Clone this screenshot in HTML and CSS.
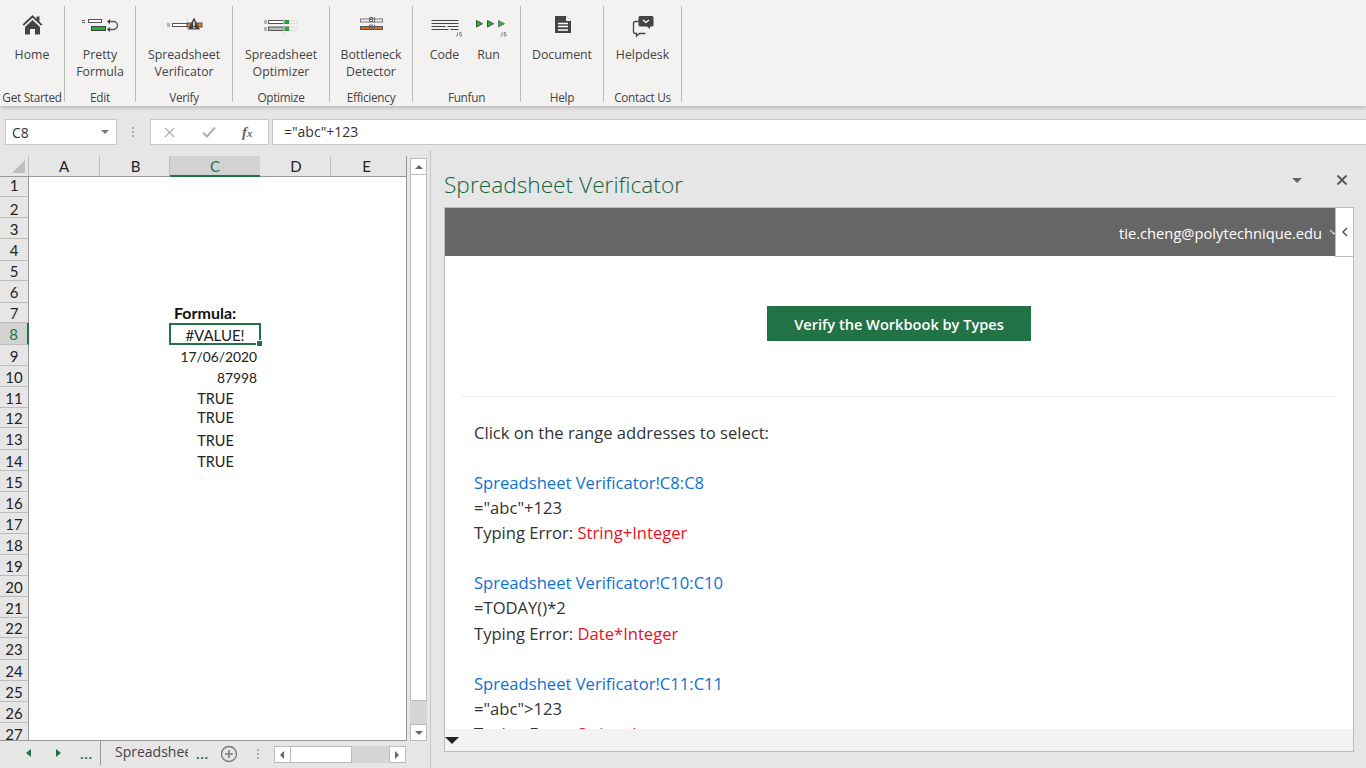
FILE: index.html
```html
<!DOCTYPE html>
<html lang="en">
<head>
<meta charset="utf-8">
<title>Spreadsheet Verificator</title>
<link rel="stylesheet" href="styles.css">
</head>
<body>
<div class="app">
  <header class="ribbon">
    <section class="group g-home">
      <div class="tools"><div class="tool">
        <svg class="icon" viewBox="0 0 48 32"><g transform="translate(.5 -5)"><path fill="#444" d="M24 6 14 15.500l1.300 1.300L24 8.800l8.700 8 1.300-1.300-3-2.800V7.500h-3v2.400z"/><path fill="#444" d="M16.500 18 24 11l7.500 7v7.500H26.500V20h-5v5.500h-5z"/></g></svg>
        <span class="lbl">Home</span></div></div>
      <div class="gname">Get Started</div>
    </section>
    <section class="group g-edit">
      <div class="tools"><div class="tool">
        <svg class="icon" viewBox="0 0 48 32"><g fill="none" stroke="#555"><path d="M6 6.500h3M6 8.500h3"/><rect x="12.500" y="5.500" width="13" height="3" fill="#fff"/><rect x="15.500" y="12.500" width="14" height="4" fill="#22b33a" stroke="#444"/><path stroke-width="1.400" d="M33 7.500h4.500a3.500 3.500 0 0 1 0 8H32"/></g><path fill="#444" d="M34 5v5l-3-2.500zM31 15.500l3-2.500v5z"/></svg>
        <span class="lbl">Pretty<br>Formula</span></div></div>
      <div class="gname">Edit</div>
    </section>
    <section class="group g-verify">
      <div class="tools"><div class="tool">
        <svg class="icon" viewBox="0 0 48 32"><g fill="none"><path stroke="#777" d="M7 10h3M7 12h3"/><rect x="12.500" y="9.500" width="15" height="3" fill="#fff" stroke="#555"/><path stroke="#ddd" d="M27.500 3v16"/><rect x="27" y="9" width="15" height="4" fill="#e07a1f" stroke="#555"/></g><path fill="#444" d="M34 3.500 40 15.500H28z"/><path fill="#fff" d="M33.300 7.500h1.400V12h-1.400zM33.300 13h1.400v1.500h-1.400z"/></svg>
        <span class="lbl">Spreadsheet<br>Verificator</span></div></div>
      <div class="gname">Verify</div>
    </section>
    <section class="group g-opt">
      <div class="tools"><div class="tool">
        <svg class="icon" viewBox="0 0 48 32"><g fill="none"><path stroke="#777" d="M7 7h3M7 9h3M7 14h3M7 16h3"/><rect x="11.500" y="6.500" width="21" height="3" fill="#fff" stroke="#555"/><rect x="11.500" y="13" width="21" height="3.500" fill="#bbb" stroke="#555"/><rect x="26" y="6.500" width="6" height="3" fill="#14b82a"/><rect x="26" y="13" width="6" height="3.500" fill="#14b82a"/><rect x="32.500" y="6.500" width="8" height="3" stroke="#ddd"/><rect x="32.500" y="13" width="8" height="3.500" stroke="#ddd"/><path stroke="#ddd" d="M27 3v18"/></g></svg>
        <span class="lbl">Spreadsheet<br>Optimizer</span></div></div>
      <div class="gname">Optimize</div>
    </section>
    <section class="group g-eff">
      <div class="tools"><div class="tool">
        <svg class="icon" viewBox="0 0 48 32"><g fill="none"><rect x="13.500" y="5" width="22" height="3" stroke="#777" fill="#f4f4f4"/><rect x="13.500" y="12.500" width="22" height="3" stroke="#555" fill="#d9691c"/><path stroke="#666" d="M22.500 3.500h3v2h-3zM22.500 5.500h3v2h-3zM27.500 3v5.500M22.500 11h3v2h-3zM22.500 13h3v2h-3zM27.500 10.500v5.500"/></g></svg>
        <span class="lbl">Bottleneck<br>Detector</span></div></div>
      <div class="gname">Efficiency</div>
    </section>
    <section class="group g-fun">
      <div class="tools"><div class="tool t-code">
        <svg class="icon" viewBox="0 0 48 32"><g transform="translate(1.500 0)"><path fill="none" stroke="#444" d="M9 6.500h27M9 9.500h27M9 12.500h14M25 12.500h11M9 15.500h17M28 15.500h8"/><path fill="none" stroke="#777" stroke-width=".8" d="M35 18.500v3.500h-1.500M39 18.500h-2v1.700h2v1.800h-2"/></g></svg>
        <span class="lbl">Code</span></div>
        <div class="tool t-run">
        <svg class="icon" viewBox="0 0 48 32"><g transform="translate(1 0)"><g stroke="#444"><path fill="#17c427" d="M10.500 6.500v6.500l6-3.300zM21.500 6.500v6.500l6-3.300z"/><path fill="#17c427" stroke="#777" d="M32.500 6.500v6.500l6-3.300z"/></g><path fill="none" stroke="#777" stroke-width=".8" d="M36 18.500v3.500h-1.500M40 18.500h-2v1.700h2v1.800h-2"/></g></svg>
        <span class="lbl">Run</span></div></div>
      <div class="gname">Funfun</div>
    </section>
    <section class="group g-help">
      <div class="tools"><div class="tool">
        <svg class="icon" viewBox="0 0 48 32"><g transform="translate(1 1)"><path fill="#444" d="M16 1h11l5 5v12H16z"/><path fill="#f3f2f1" d="M27 1l5 5h-5z"/><path fill="none" stroke="#fff" stroke-width="1.400" d="M19 8.500h10M19 11.500h10M19 15h10"/></g></svg>
        <span class="lbl">Document</span></div></div>
      <div class="gname">Help</div>
    </section>
    <section class="group g-contact">
      <div class="tools"><div class="tool">
        <svg class="icon" viewBox="0 0 48 32"><g transform="translate(-1 1)"><path fill="none" stroke="#444" stroke-width="1.300" d="M21 6.500h-3.500a2 2 0 0 0-2 2v8a2 2 0 0 0 2 2h1v2.500l3-2.500h6"/><path fill="#444" d="M22 1h12a1.500 1.500 0 0 1 1.500 1.500V10a1.500 1.500 0 0 1-1.500 1.500h-2V14l-3-2.500h-7A1.500 1.500 0 0 1 20.500 10V2.500A1.500 1.500 0 0 1 22 1z"/><path fill="none" stroke="#fff" stroke-width="1.300" d="M25 5l3 2.500L31 5"/></g></svg>
        <span class="lbl">Helpdesk</span></div></div>
      <div class="gname">Contact Us</div>
    </section>
  </header>

  <div class="formula-bar">
    <div class="namebox"><span>C8</span><i class="caret"></i></div>
    <div class="fb-dots"></div>
    <div class="fb-btns">
      <svg class="fb-x" viewBox="0 0 12 12"><path d="M1 1l10 10M11 1 1 11" stroke="#b5b5b5" stroke-width="1.500"/></svg>
      <svg class="fb-check" viewBox="0 0 14 12"><path d="M1 6.500 5 10.500 13 1.500" fill="none" stroke="#b5b5b5" stroke-width="2.200"/></svg>
      <span class="fx">f<sub>x</sub></span>
    </div>
    <div class="fb-input">="abc"+123</div>
  </div>

  <main class="main">
    <div class="sheet-area">
      <div class="sheet-top">
        <div class="sheet">
          <div class="col-heads">
            <div class="corner"><i></i></div>
            <div class="ch ca">A</div><div class="ch cb">B</div><div class="ch cc sel">C</div><div class="ch cd">D</div><div class="ch ce">E</div>
          </div>
          <div class="rows">
            <div class="row h20"><b class="rh">1</b></div>
            <div class="row h21"><b class="rh">2</b></div>
            <div class="row h21"><b class="rh">3</b></div>
            <div class="row h22"><b class="rh">4</b></div>
            <div class="row h20"><b class="rh">5</b></div>
            <div class="row h22"><b class="rh">6</b></div>
            <div class="row h20"><b class="rh">7</b><div class="cell bold">Formula:</div></div>
            <div class="row h22"><b class="rh active">8</b><div class="cell center active-cell">#VALUE!<i class="handle"></i></div></div>
            <div class="row h21"><b class="rh">9</b><div class="cell right">17/06/2020</div></div>
            <div class="row h21"><b class="rh">10</b><div class="cell right">87998</div></div>
            <div class="row h21"><b class="rh">11</b><div class="cell center low">TRUE</div></div>
            <div class="row h20"><b class="rh">12</b><div class="cell center high">TRUE</div></div>
            <div class="row h22"><b class="rh">13</b><div class="cell center low">TRUE</div></div>
            <div class="row h21"><b class="rh">14</b><div class="cell center low">TRUE</div></div>
            <div class="row h21"><b class="rh">15</b></div>
            <div class="row h21"><b class="rh">16</b></div>
            <div class="row h21"><b class="rh">17</b></div>
            <div class="row h21"><b class="rh">18</b></div>
            <div class="row h21"><b class="rh">19</b></div>
            <div class="row h21"><b class="rh">20</b></div>
            <div class="row h21"><b class="rh">21</b></div>
            <div class="row h20"><b class="rh">22</b></div>
            <div class="row h22"><b class="rh">23</b></div>
            <div class="row h21"><b class="rh">24</b></div>
            <div class="row h21"><b class="rh">25</b></div>
            <div class="row h21"><b class="rh">26</b></div>
            <div class="row h21"><b class="rh">27</b></div>
          </div>
        </div>
        <div class="vscroll">
          <div class="sb-btn"><i class="tri-up"></i></div>
          <div class="sb-thumb"></div>
          <div class="sb-track"></div>
          <div class="sb-btn"><i class="tri-down"></i></div>
        </div>
      </div>
      <div class="tabs">
        <div class="tab-nav">
          <i class="nav-l"></i><i class="nav-r"></i><span class="dots">...</span>
        </div>
        <div class="tab-name"><span>Spreadshee</span></div>
        <span class="dots d2">...</span>
        <svg class="plus" viewBox="0 0 18 18"><circle cx="9" cy="9" r="7.500" fill="none" stroke="#777" stroke-width="1.300"/><path d="M9 5v8M5 9h8" stroke="#777" stroke-width="1.500"/></svg>
        <div class="tab-grip"></div>
        <div class="hscroll">
          <div class="hb"><i class="tri-left"></i></div>
          <div class="h-thumb"></div>
          <div class="h-track"></div>
          <div class="hb"><i class="tri-right"></i></div>
        </div>
      </div>
    </div>

    <aside class="pane">
      <div class="pane-head">
        <h1 class="pane-title">Spreadsheet Verificator</h1>
        <i class="pane-caret"></i>
        <svg class="pane-x" viewBox="0 0 12 12"><path d="M1.500 1.500l9 9M10.500 1.500l-9 9" stroke="#555" stroke-width="1.800"/></svg>
      </div>
      <div class="pane-frame">
        <div class="user-bar">
          <span class="email">tie.cheng@polytechnique.edu</span>
          <svg class="user-chev" viewBox="0 0 10 6"><path d="M1 1l4 4 4-4" fill="none" stroke="#ddd" stroke-width="1.200"/></svg>
        </div>
        <div class="collapse"><svg viewBox="0 0 6 10"><path d="M5 1 1 5l4 4" fill="none" stroke="#444" stroke-width="1.300"/></svg></div>
        <div class="pane-scroll">
          <div class="btn-wrap"><div class="btn">Verify the Workbook by Types</div></div>
          <hr class="rule">
          <p class="intro">Click on the range addresses to select:</p>
          <p class="entry"><span class="link">Spreadsheet Verificator!C8:C8</span><br>="abc"+123<br>Typing Error: <span class="err">String+Integer</span></p>
          <p class="entry"><span class="link">Spreadsheet Verificator!C10:C10</span><br>=TODAY()*2<br>Typing Error: <span class="err">Date*Integer</span></p>
          <p class="entry"><span class="link">Spreadsheet Verificator!C11:C11</span><br>="abc"&gt;123<br>Typing Error: <span class="err">String&gt;Integer</span></p>
        </div>
        <div class="pane-foot"><i class="foot-caret"></i></div>
      </div>
    </aside>
  </main>
</div>
</body>
</html>
```
FILE: styles.css
```css
* { box-sizing: border-box; }
html, body { margin: 0; height: 100%; overflow: hidden; }
body { font-family: "Open Sans", "Noto Sans", sans-serif; color: #333; background: #e6e6e6; }
.app { width: 1366px; height: 768px; display: flex; flex-direction: column; }

/* ribbon */
.ribbon { height: 106px; background: #f3f2f1; display: flex; padding-top: 6px; box-shadow: 0 1px 5px rgba(0,0,0,.28); position: relative; z-index: 2; flex: none; }
.group { border-right: 1px solid #b9b9b9; height: 96px; display: flex; flex-direction: column; align-items: center; }
.g-home { width: 65px; }
.g-edit { width: 71px; }
.g-verify { width: 97px; }
.g-opt { width: 97px; }
.g-eff { width: 83px; }
.g-fun { width: 108px; }
.g-help { width: 83px; }
.g-contact { width: 78px; }
.tools { flex: 1; display: flex; justify-content: center; }
.tool { display: flex; flex-direction: column; align-items: center; width: 80px; }
.group:first-child .tool { width: 60px; }
.g-edit .tool { width: 70px; }
.t-code, .t-run { width: 44px; }
.icon { width: 48px; height: 32px; margin-top: 8px; flex: none; }
.lbl { font-size: 12.300px; line-height: 17px; text-align: center; color: #444; white-space: nowrap; }
.gname { font-size: 11.800px; line-height: 14px; color: #444; height: 16px; padding-top: 4px; white-space: nowrap; letter-spacing: -.3px; box-sizing: content-box; height: 12px; }

/* formula bar */
.formula-bar { height: 44px; background: #e6e6e6; display: flex; align-items: flex-start; padding: 13px 0 0 5px; flex: none; }
.namebox { width: 112px; height: 26px; background: #fff; border: 1px solid #c6c6c6; display: flex; align-items: center; justify-content: space-between; padding: 0 7px 0 6px; font-size: 14px; }
.caret { width: 0; height: 0; border: 4px solid transparent; border-top: 4px solid #777; border-bottom: 0; }
.fb-dots { width: 4px; height: 12px; margin: 7px 15px 0 14px; background: radial-gradient(circle, #aaa 1px, transparent 1.300px) 0 0 / 4px 4px; }
.fb-btns { width: 119px; height: 26px; background: #fff; border: 1px solid #c6c6c6; display: flex; align-items: center; padding-left: 13px; }
.fb-x { width: 11px; height: 11px; }
.fb-check { width: 14px; height: 12px; margin-left: 27px; }
.fx { font-family: "Liberation Serif", serif; font-style: italic; font-size: 15px; font-weight: bold; color: #666; margin-left: 26px; line-height: 14px; }
.fx sub { font-size: 11px; vertical-align: baseline; }
.fb-input { flex: 1; height: 26px; margin-left: 3px; background: #fff; border: 1px solid #c6c6c6; border-right: 0; padding-left: 11px; font-size: 14px; line-height: 24px; color: #333; }

/* sheet */
.main { flex: 1; display: flex; min-height: 0; }
.sheet-area { width: 431px; border-right: 1px solid #c6c6c6; display: flex; flex-direction: column; padding-top: 6px; flex: none; }
.sheet-top { height: 585px; display: flex; }
.sheet { width: 407px; height: 585px; background: #fff; border-right: 1px solid #999; border-bottom: 1px solid #999; overflow: hidden; flex: none; }
.col-heads { display: flex; height: 21px; background: #e6e6e6; border-bottom: 1px solid #999; }
.corner { width: 29px; border-right: 1px solid #bbb; position: relative; flex: none; }
.corner i { position: absolute; right: 3px; bottom: 3px; width: 0; height: 0; border-style: solid; border-width: 0 0 13px 13px; border-color: transparent transparent #bdbdbd transparent; }
.ch { font-family: Lato, "Open Sans", sans-serif; font-size: 15px; color: #222; text-align: center; line-height: 21px; border-right: 1px solid #bbb; height: 20px; flex: none; }
.ca { width: 71px; }
.cb { width: 70px; padding-left: 2px; }
.cc { width: 90px; }
.cd { width: 71px; padding-left: 2px; }
.ce { width: 71px; border-right: 0; }
.ch.sel { background: #d2d2d2; color: #217346; border-bottom: 2px solid #217346; height: 21px; border-right: 0; }
.row { display: flex; }
.h20 { height: 20px; }
.h21 { height: 21px; }
.h22 { height: 22px; }
.rh { width: 29px; flex: none; font: normal 15px/1 Lato, "Open Sans", sans-serif; color: #222; background: #e6e6e6; border-right: 1px solid #999; border-bottom: 1px solid #bbb; display: flex; align-items: center; justify-content: center; padding-top: 2px; }
.row:first-child .rh { padding: 0 0 3px; }
.row:nth-child(2) .rh { padding-top: 4px; }
.rh.active { background: #d2d2d2; color: #217346; border-right: 2px solid #217346; }
.cell { width: 92px; margin-left: 140px; font: 14.500px/1 Lato, "Open Sans", sans-serif; color: #222; display: flex; align-items: center; padding: 2px 4px 0 5px; position: relative; white-space: nowrap; }
.bold { font-weight: bold; color: #111; font-size: 16px; padding-top: 0; }
.center { justify-content: center; }
.right { justify-content: flex-end; font-size: 13.800px; }
.low { padding-top: 4px; }
.high { padding-top: 0; }
.active-cell { border: 2px solid #217346; padding: 2px 2px 0; font-size: 15px; }
.handle { position: absolute; right: -4px; bottom: -4px; width: 5px; height: 5px; background: #217346; border: 1px solid #fff; box-sizing: content-box; }

.vscroll { width: 17px; margin: 2px 0 0 3px; display: flex; flex-direction: column; height: 583px; flex: none; }
.sb-btn { height: 17px; border: 1px solid #bbb; background: #fff; display: flex; align-items: center; justify-content: center; flex: none; }
.sb-thumb { height: 526px; background: #fff; border: 1px solid #bbb; border-top: 0; flex: none; }
.sb-track { flex: 1; background: #d6d6d6; }
.tri-up { width: 0; height: 0; border: 4px solid transparent; border-bottom: 4px solid #666; border-top: 0; }
.tri-down { width: 0; height: 0; border: 4px solid transparent; border-top: 4px solid #666; border-bottom: 0; }
.tri-left { width: 0; height: 0; border: 4px solid transparent; border-right: 4px solid #666; border-left: 0; }
.tri-right { width: 0; height: 0; border: 4px solid transparent; border-left: 4px solid #666; border-right: 0; }

/* tabs */
.tabs { flex: 1; display: flex; align-items: flex-start; }
.tab-nav { width: 101px; height: 24px; border-right: 1px solid #999; display: flex; align-items: center; padding-left: 26px; flex: none; }
.nav-l { width: 0; height: 0; border: 4px solid transparent; border-right: 5px solid #217346; border-left: 0; }
.nav-r { width: 0; height: 0; border: 4px solid transparent; border-left: 5px solid #217346; border-right: 0; margin-left: 25px; }
.dots { font: bold 13px/1 "Liberation Sans", sans-serif; color: #217346; letter-spacing: .6px; }
.tab-nav .dots { margin-left: 19px; margin-top: 3px; }
.tab-name { width: 73px; margin-left: 14px; height: 24px; overflow: hidden; font-size: 14px; line-height: 22px; color: #444; white-space: nowrap; flex: none; }
.d2 { margin: 7px 0 0 8px; }
.plus { width: 18px; height: 18px; margin: 4px 0 0 11px; flex: none; }
.tab-grip { width: 4px; height: 12px; margin: 7px 0 0 18px; background: radial-gradient(circle, #aaa 1px, transparent 1.300px) 0 0 / 4px 4px; flex: none; }
.hscroll { display: flex; width: 132px; height: 17px; margin: 5px 0 0 14px; flex: none; }
.hb { width: 17px; height: 17px; border: 1px solid #bbb; background: #fff; display: flex; align-items: center; justify-content: center; flex: none; }
.h-thumb { width: 61px; background: #fff; border: 1px solid #bbb; border-left: 0; flex: none; }
.h-track { flex: 1; background: #d6d6d6; }

/* pane */
.pane { flex: 1; padding: 0 12px 16px 13px; display: flex; flex-direction: column; min-width: 0; }
.pane-head { height: 57px; display: flex; align-items: flex-start; flex: none; }
.pane-title { margin: 19px auto 0 0; font-size: 22.700px; line-height: 32px; font-weight: 300; color: #176338; white-space: nowrap; }
.pane-caret { width: 0; height: 0; border: 5px solid transparent; border-top: 5px solid #666; border-bottom: 0; margin: 28px 34px 0 0; }
.pane-x { width: 12px; height: 12px; margin: 24px 6px 0 0; }
.pane-frame { flex: 1; border: 1px solid #bbb; background: #fff; display: flex; flex-direction: column; position: relative; min-height: 0; }
.user-bar { height: 48px; background: #666; display: flex; align-items: center; justify-content: flex-end; padding-right: 14px; color: #fff; flex: none; }
.email { font-size: 14.700px; padding-top: 2px; margin-right: -2px; }
.user-chev { width: 10px; height: 6px; margin-left: 9px; }
.collapse { position: absolute; top: -1px; right: -1px; width: 19px; height: 50px; background: #fff; border: 1px solid #bbb; display: flex; align-items: center; justify-content: center; }
.collapse svg { width: 6px; height: 10px; }
.pane-scroll { flex: 1; overflow: hidden; min-height: 0; padding: 50px 16px 0 16px; color: #333; font-size: 16.600px; line-height: 25.300px; }
.btn-wrap { display: flex; justify-content: center; }
.btn { width: 264px; height: 35px; background: #217346; color: #fff; font-size: 14.600px; font-weight: 600; text-align: center; line-height: 37px; }
.rule { border: 0; border-top: 1px solid #eee; margin: 55px 0 0; }
.intro { margin: 23px 0 0 13px; }
.entry { margin: 24.500px 0 0 13px; white-space: nowrap; }
.link { color: #0e72cf; }
.err { color: #e81123; }
.pane-foot { height: 22px; background: #f3f3f3; padding: 8px 0 0 0; flex: none; position: relative; }
.foot-caret { display: block; width: 0; height: 0; border: 7px solid transparent; border-top: 7px solid #222; border-bottom: 0; }
```
